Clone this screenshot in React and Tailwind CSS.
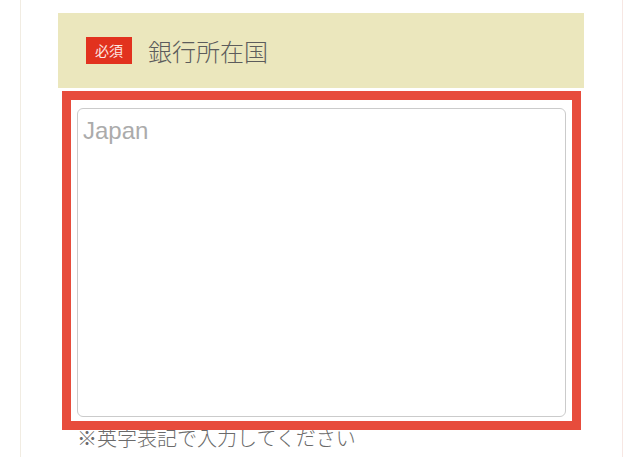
export default function App() {
  return (
    <div className="h-[457px] w-[640px] overflow-hidden bg-white font-['Liberation_Sans','Noto_Sans_CJK_JP',sans-serif]">
      <div className="ml-[20px] h-full w-[603px] border-l border-r border-l-[#f1ece2] border-r-[#f7e7e3] pl-[37px] pt-[13px]">
        <div className="flex h-[75px] w-[526px] items-center bg-[#ebe7bd] pl-[28px]">
          <span className="flex h-[27px] w-[46px] items-center justify-center bg-[#e2321e] text-[14px] leading-none text-[#fde8e4]">
            必須
          </span>
          <h2 className="ml-[16px] font-['Noto_Sans_CJK_JP',sans-serif] text-[24px] font-light leading-none text-[#5c5c5c]">
            銀行所在国
          </h2>
        </div>

        <div className="relative z-10 ml-[4px] mt-[3px] w-[519px] border-[9px] border-[#e74c3c] bg-white pb-[4px] pl-[6px] pr-[6px] pt-[8px]">
          <textarea
            placeholder="Japan"
            className="block h-[309px] w-full resize-none rounded-[6px] border-[1.5px] border-[#cbcbcb] bg-white px-[5px] pt-[8px] text-[24px] leading-[28px] text-[#333] outline-none placeholder:text-[#ababab]"
          />
        </div>

        <p className="relative ml-[19px] mt-[-2px] font-['Noto_Sans_CJK_JP',sans-serif] text-[20px] font-light leading-[20px] text-[#6a6a6a]">
          ※英字表記で入力してください
        </p>
      </div>
    </div>
  )
}
